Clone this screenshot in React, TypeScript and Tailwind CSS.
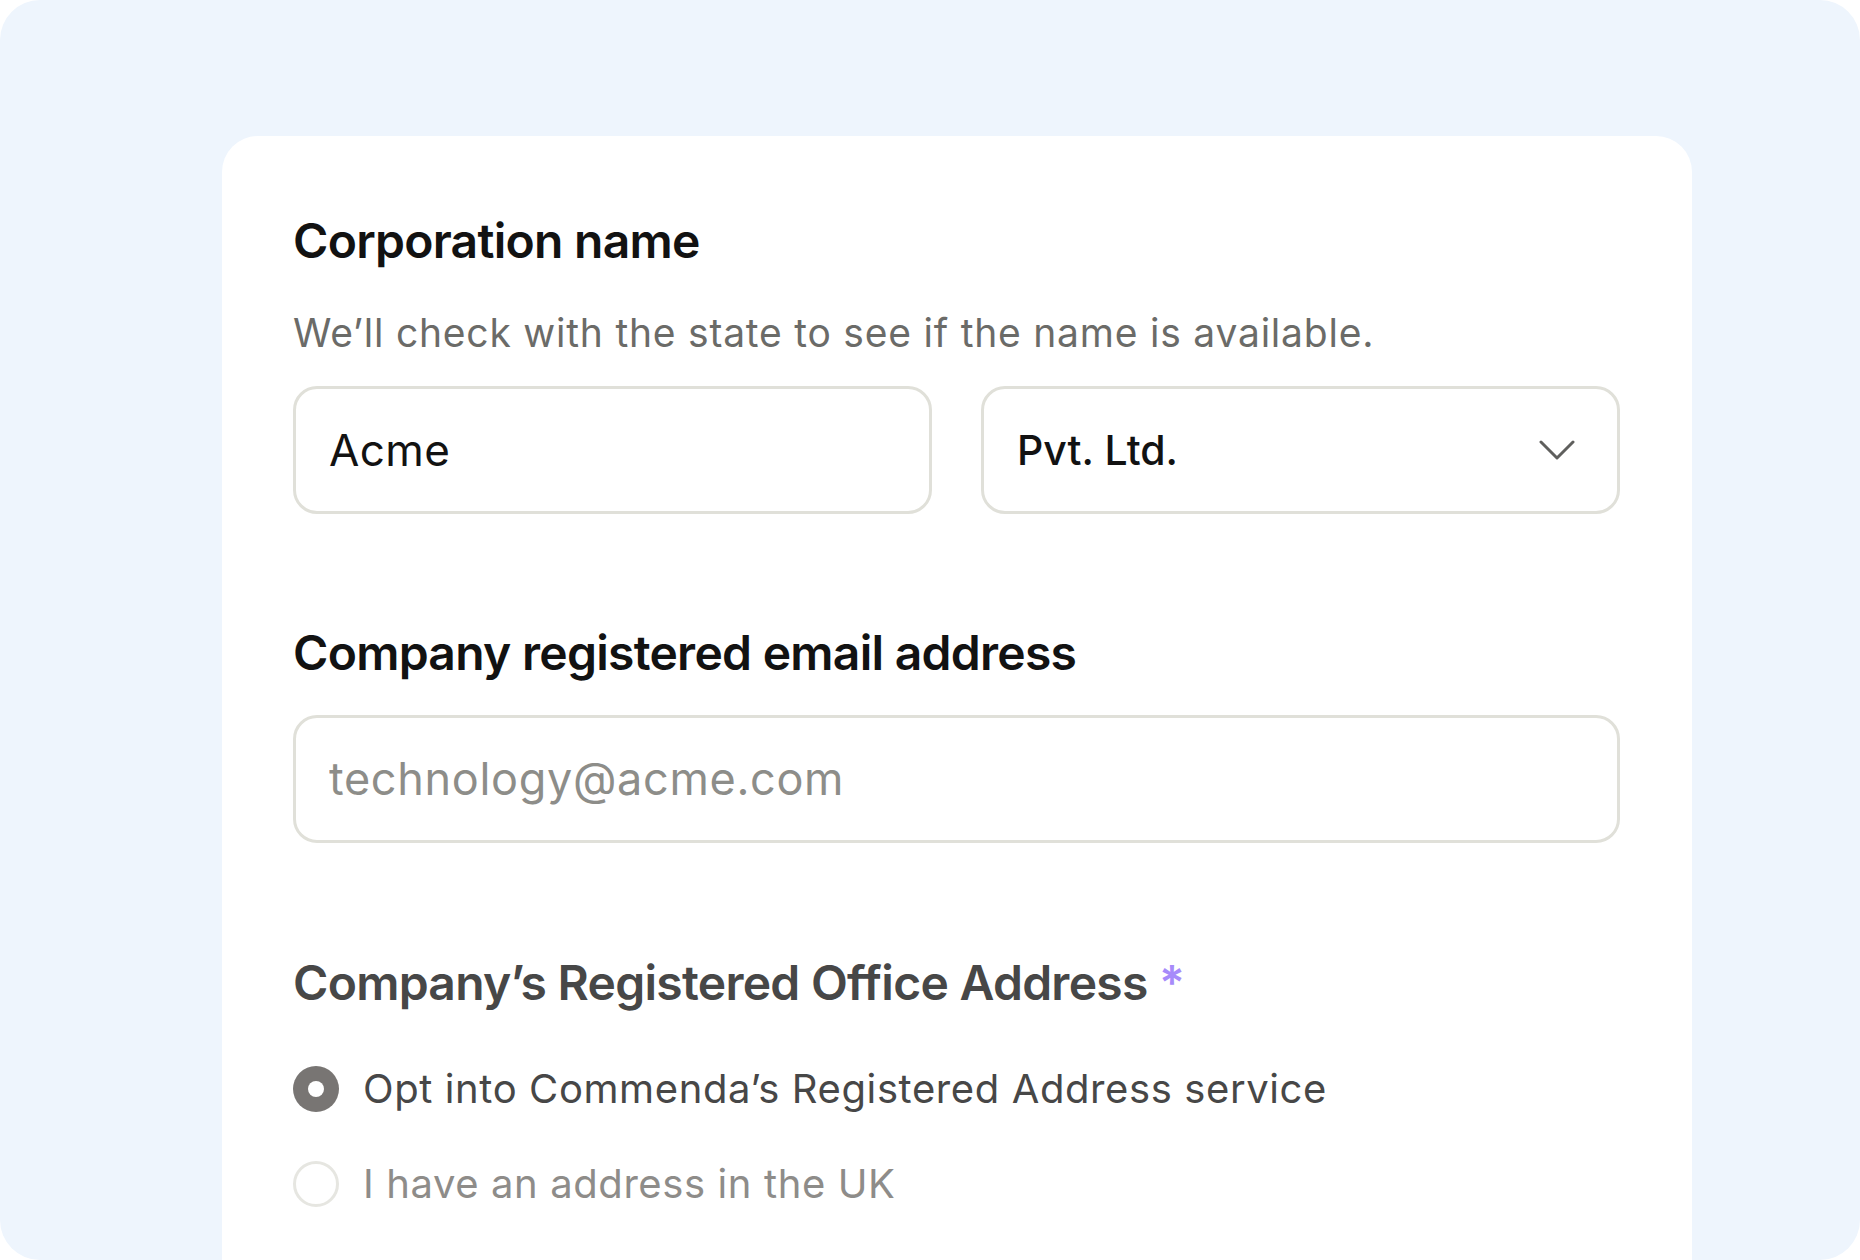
import React from "react";

export default function App() {
  return (
    <div className="w-[1860px] h-[1260px] bg-white overflow-hidden" style={{ fontFamily: "Inter, 'Noto Sans', sans-serif" }}>
      <div className="w-full h-full rounded-[40px] bg-[#eef5fd] overflow-hidden pl-[222px] pt-[136px]">
        <div className="w-[1470px] h-[1200px] bg-white rounded-t-[36px] pl-[71px] pr-[72px] pt-[76px]">
          <h2 className="text-[48px] leading-[1.2] font-semibold tracking-[-0.015em] text-[#121212]">Corporation name</h2>
          <p className="mt-[40px] text-[39px] leading-[1.2] tracking-[0.02em] text-[#6b6b68]">We’ll check with the state to see if the name is available.</p>
          <div className="mt-[30px] grid grid-cols-2 gap-[49px]">
            <div className="h-[128px] rounded-[24px] border-[3px] border-[#e0e0d9] flex items-center px-[33px]">
              <input
                readOnly
                defaultValue="Acme"
                className="w-full bg-transparent outline-none text-[44px] tracking-[0.01em] text-[#121212]"
              />
            </div>
            <div className="h-[128px] rounded-[24px] border-[3px] border-[#e0e0d9] flex items-center justify-between pl-[33px] pr-[42px]">
              <span className="text-[41px] font-medium text-[#121212]">Pvt. Ltd.</span>
              <svg width="36" height="22" viewBox="0 0 36 22" fill="none">
                <polyline points="2,3 18,19 34,3" stroke="#5f5f5d" strokeWidth="3" strokeLinecap="round" strokeLinejoin="round" />
              </svg>
            </div>
          </div>

          <h2 className="mt-[110px] text-[48px] leading-[1.2] font-semibold tracking-[-0.015em] text-[#121212]">Company registered email address</h2>
          <div className="mt-[33px] h-[128px] rounded-[24px] border-[3px] border-[#e0e0d9] flex items-center px-[33px]">
            <input
              readOnly
              placeholder="technology@acme.com"
              className="w-full bg-transparent outline-none text-[45px] tracking-[0.015em] text-[#121212] placeholder:text-[#8d8d89]"
            />
          </div>

          <h2 className="mt-[111px] text-[48px] leading-[1.2] font-semibold tracking-[-0.015em] text-[#474747]">
            Company’s Registered Office Address <span className="text-[#a78bfa]">*</span>
          </h2>
          <div className="mt-[53px] flex flex-col gap-[47px]">
            <div className="flex items-center gap-[24px]">
              <span className="w-[46px] h-[46px] rounded-full bg-[#787573] flex items-center justify-center">
                <span className="w-[16px] h-[16px] rounded-full bg-white" />
              </span>
              <span className="text-[40px] leading-[1.2] tracking-[0.015em] text-[#474747]">Opt into Commenda’s Registered Address service</span>
            </div>
            <div className="flex items-center gap-[24px]">
              <span className="w-[46px] h-[46px] rounded-full border-[3px] border-[#e6e6e1]" />
              <span className="text-[40px] leading-[1.2] tracking-[0.015em] text-[#8e8c89]">I have an address in the UK</span>
            </div>
          </div>
        </div>
      </div>
    </div>
  );
}
